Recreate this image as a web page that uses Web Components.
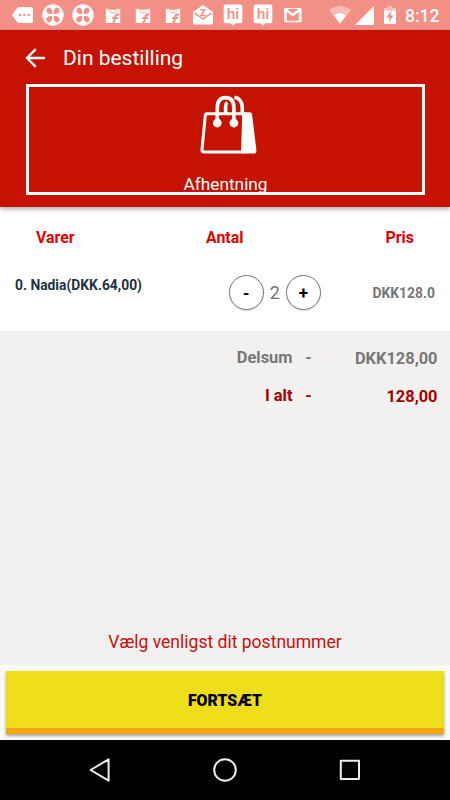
<!DOCTYPE html>
<html lang="da">
<head>
<meta charset="UTF-8">
<meta name="viewport" content="width=device-width, initial-scale=1">
<title>Din bestilling</title>
<style>
    body {
        margin: 0;
        font-family: Roboto, "Liberation Sans", sans-serif;
        background: #f3f1f0;
    }
</style>
</head>
<body>
<order-screen></order-screen>

<script>
const petal = 'M10.2 10.2C10.3 8.6 10.2 6.8 9.6 5.4C9 4 7.6 3.3 6.3 3.8C4.8 4.4 4.2 6 4.5 7.3C4.9 9.2 7 10.2 10.2 10.2Z';

const flower = `
    <svg width="22" height="22" viewBox="0 0 22 22">
        <circle cx="11" cy="11" r="10.7" fill="#fff"/>
        <g fill="#f39086">
            <path d="${petal}"/>
            <path d="${petal}" transform="translate(22 0) scale(-1 1)"/>
            <path d="${petal}" transform="translate(0 22) scale(1 -1)"/>
            <path d="${petal}" transform="rotate(180 11 11)"/>
        </g>
    </svg>`;

const shopBag = `
    <svg width="22" height="22" viewBox="0 0 22 22">
        <path d="M3.8 4.2L5 5.4L6.4 4.4L7.8 5.8H14.2L15.6 4.4L17 5.4L18.2 4.2V19H3.8Z" fill="#fff"/>
        <path d="M7 5.8C7.4 9.6 14.6 9.6 15 5.8" fill="none" stroke="#f39086" stroke-width=".8"/>
        <path d="M17.2 10.5C14.4 9.9 13.7 11 13.3 12.8L12.4 17Q12 18.4 10.6 18.2M10.3 13.9H16" fill="none" stroke="#f39086" stroke-width="2"/>
    </svg>`;

const hike = `
    <svg width="22" height="22" viewBox="0 0 22 22">
        <path d="M3.5 .6H18.5Q20.3 .6 20.3 2.4V17.2Q20.3 19.2 18.5 19.2H13.5L11 21.7L8.5 19.2H3.5Q1.7 19.2 1.7 17.2V2.4Q1.7 .6 3.5 .6Z" fill="#fff"/>
        <text x="11" y="14.7" text-anchor="middle" font-family="Roboto" font-size="15.5" font-weight="500" fill="#f39086">hi</text>
    </svg>`;

const icons = {
    more: `
        <svg width="22" height="22" viewBox="0 0 22 22">
            <path d="M0 11L5.2 4Q6 3 7.2 3H19.5Q21 3 21 4.5V17.5Q21 19 19.5 19H7.2Q6 19 5.2 18Z" fill="#fff"/>
            <g fill="#f39086"><circle cx="8" cy="11" r="1.2"/><circle cx="12.3" cy="11" r="1.2"/><circle cx="16.6" cy="11" r="1.2"/></g>
        </svg>`,
    flower,
    shopBag,
    hike,
    mail: `
        <svg width="22" height="22" viewBox="0 0 22 22">
            <path d="M1 8L11 1L21 8V19Q21 20.5 19.5 20.5H2.5Q1 20.5 1 19Z" fill="#fff"/>
            <path d="M2.4 8.8L11 15L19.6 8.8" fill="none" stroke="#f39086" stroke-width="1.5"/>
            <text x="11" y="11.6" text-anchor="middle" font-family="Roboto" font-size="9.5" font-weight="900" fill="#f39086">Z</text>
        </svg>`,
    gmail: `
        <svg width="22" height="22" viewBox="0 0 22 22">
            <rect x="2" y="4" width="17.6" height="14.2" rx="1.4" fill="#fff"/>
            <path d="M4.8 8V16.7H16.8V8L10.8 12.6Z M5.2 5.1H16.4L10.8 9.4Z" fill="#f39086"/>
        </svg>`,
    wifi: `
        <svg width="22" height="18" viewBox="0 0 22 18">
            <path d="M0 4Q11-4 22 4L11 17.5Z" fill="#fff" opacity=".4"/>
            <path d="M4.7 9.6Q11 4.2 17.3 9.6L11 17.5Z" fill="#fff"/>
        </svg>`,
    signal: `
        <svg width="19" height="19" viewBox="0 0 19 19"><path d="M19 0V19H0Z" fill="#fff"/></svg>`,
    battery: `
        <svg width="12" height="18" viewBox="0 0 12 18">
            <path d="M3.7 0H8.3V2H12V5H0V2H3.7Z" fill="#fff" opacity=".45"/>
            <path d="M0 4.8H12V17Q12 18 11 18H1Q0 18 0 17Z" fill="#fff"/>
            <path d="M7.4 4.3L2.4 11.4H5.6L4.6 16.6L9.7 9.4H6.6Z" fill="#f39086"/>
        </svg>`
};

class StatusBar extends HTMLElement {
    connectedCallback() {
        const notices = ['more', 'flower', 'flower', 'shopBag', 'shopBag', 'shopBag', 'mail', 'hike', 'hike', 'gmail'];
        this.attachShadow({ mode: 'open' });
        this.shadowRoot.innerHTML = `
            <style>
                :host {
                    display: flex;
                    align-items: center;
                    height: 30px;
                    background: #f39086;
                    color: #fff;
                }
                svg { display: block; }
                .notices { display: flex; padding-left: 7.5px; flex: 1; }
                .notices span {
                    width: 30px;
                    height: 30px;
                    display: flex;
                    align-items: center;
                    justify-content: center;
                }
                .system { display: flex; align-items: center; padding-right: 10.5px; }
                .signal { margin-left: 4.5px; }
                .battery { margin-left: 10px; }
                time { font-size: 17.5px; font-weight: 500; margin-left: 9px; line-height: 30px; padding-top: 1px; }
            </style>
            <div class="notices">${notices.map(n => `<span>${icons[n]}</span>`).join('')}</div>
            <div class="system">
                <span>${icons.wifi}</span>
                <span class="signal">${icons.signal}</span>
                <span class="battery">${icons.battery}</span>
                <time>8:12</time>
            </div>
        `;
    }
}

class OrderHeader extends HTMLElement {
    connectedCallback() {
        this.attachShadow({ mode: 'open' });
        this.shadowRoot.innerHTML = `
            <style>
                :host {
                    display: block;
                    box-sizing: border-box;
                    height: 177px;
                    background: #c61200;
                    color: #fff;
                    box-shadow: 0 2px 5px rgba(0, 0, 0, 0.35);
                    position: relative;
                }
                .bar { display: flex; align-items: center; height: 54px; padding: 0 25px; }
                .bar svg { display: block; margin-top: 1px; }
                h1 { margin: 1px 0 0 18px; font-size: 21px; font-weight: 400; line-height: 30px; }
                .pickup {
                    box-sizing: border-box;
                    height: 111px;
                    margin: 0 25px 0 26px;
                    border: 3px solid #fff;
                    display: flex;
                    flex-direction: column;
                    align-items: center;
                    overflow: hidden;
                }
                .pickup svg { flex: none; margin: 8px 0 0 6px; }
                .label { font-size: 17.3px; line-height: 24px; margin-top: 17px; flex: none; }
            </style>
            <div class="bar">
                <svg width="20" height="20" viewBox="0 0 20 20" fill="none" stroke="#fff" stroke-width="2.4">
                    <path d="M20 10H2.2M10.8 1.2L2 10L10.8 18.8"/>
                </svg>
                <h1><slot name="title"></slot></h1>
            </div>
            <div class="pickup">
                <svg width="58" height="60" viewBox="0 0 58 60" fill="none" stroke="#fff">
                    <path d="M6.8 18.7H43.7L42.6 57H3.9Q1.7 57 2 54.7L5.3 20.4Q5.5 18.7 6.8 18.7Z" stroke-width="3"/>
                    <path d="M43 17.2H49.8Q51.8 17.2 52.1 19.4L56.4 55.3Q56.7 58.5 54.2 58.5H42Z" fill="#fff" stroke="none"/>
                    <path d="M17.3 28V13Q17.3 2.6 25.6 2.6Q33.9 2.6 33.9 13V28" stroke-width="3.6"/>
                    <path d="M25.6 18V11.5Q25.6 8.6 27.3 7.4" stroke-width="3.6"/>
                    <path d="M34.4 2.3Q42.3 3.5 42.3 13V18" stroke-width="3.6"/>
                    <g fill="#fff" stroke="none"><circle cx="17.3" cy="28" r="4.4"/><circle cx="33.9" cy="28" r="4.4"/></g>
                </svg>
                <div class="label"><slot name="method"></slot></div>
            </div>
        `;
    }
}

class QuantityStepper extends HTMLElement {
    connectedCallback() {
        this.attachShadow({ mode: 'open' });
        this.shadowRoot.innerHTML = `
            <style>
                :host { display: flex; align-items: center; }
                button {
                    box-sizing: border-box;
                    width: 35px;
                    height: 35px;
                    padding: 0;
                    border: 1px solid #777;
                    border-radius: 50%;
                    background: #fff;
                    box-shadow: 0 1px 2px rgba(0, 0, 0, 0.15);
                    color: #000;
                    font: 700 17px Roboto, sans-serif;
                }
                span { width: 22.5px; text-align: center; font-size: 18px; color: #6f6f6f; }
            </style>
            <button>-</button>
            <span><slot></slot></span>
            <button>+</button>
        `;
    }
}

class OrderItems extends HTMLElement {
    connectedCallback() {
        this.attachShadow({ mode: 'open' });
        this.shadowRoot.innerHTML = `
            <style>
                :host { display: block; height: 124px; background: #fff; font-weight: 700; }
                .head {
                    display: grid;
                    grid-template-columns: 170px 1fr auto;
                    height: 60px;
                    line-height: 61px;
                    padding: 0 36px;
                    font-size: 15.9px;
                    color: #e50000;
                }
                .row { display: grid; grid-template-columns: 228.5px 1fr auto; padding: 0 15px 0 0; height: 51px; align-items: center; }
                .name { padding: 0 0 16px 15px; font-size: 13.85px; line-height: 20px; color: #1d333d; }
                quantity-stepper { font-weight: 400; }
                .price { font-size: 13.9px; padding-top: 1px; color: #777; }
            </style>
            <div class="head"><span>Varer</span><span>Antal</span><span>Pris</span></div>
            <div class="row">
                <div class="name"><slot name="name"></slot></div>
                <quantity-stepper>2</quantity-stepper>
                <div class="price"><slot name="price"></slot></div>
            </div>
        `;
    }
}

class TotalLine extends HTMLElement {
    connectedCallback() {
        this.attachShadow({ mode: 'open' });
        this.shadowRoot.innerHTML = `
            <style>
                :host {
                    display: grid;
                    grid-template-columns: 292.5px 32px 1fr;
                    height: 38px;
                    line-height: 38px;
                    padding-right: 12.5px;
                    font-size: 16.4px;
                    font-weight: 700;
                }
                .label, .amount { text-align: right; }
                .dash { text-align: center; }
                .amount { padding-top: 1px; }
            </style>
            <span class="label"><slot name="label"></slot></span>
            <span class="dash">-</span>
            <span class="amount"><slot></slot></span>
        `;
    }
}

class ContinueButton extends HTMLElement {
    connectedCallback() {
        this.attachShadow({ mode: 'open' });
        this.shadowRoot.innerHTML = `
            <style>
                :host { display: block; box-sizing: border-box; height: 75px; padding: 6px; background: #fafafa; }
                button {
                    display: block;
                    box-sizing: border-box;
                    width: 100%;
                    height: 63px;
                    padding: 1px 0 0;
                    border: 0;
                    border-bottom: 6px solid #f5a511;
                    background: #eedd1b;
                    box-shadow: 0 2px 3px rgba(0, 0, 0, 0.35);
                    color: #000;
                    font: 900 15.8px Roboto, sans-serif;
                }
            </style>
            <button><slot></slot></button>
        `;
    }
}

class NavBar extends HTMLElement {
    connectedCallback() {
        this.attachShadow({ mode: 'open' });
        this.shadowRoot.innerHTML = `
            <style>
                :host {
                    display: flex;
                    align-items: center;
                    justify-content: center;
                    gap: 101px;
                    height: 60px;
                    background: #000;
                }
            </style>
            <svg width="24" height="24" viewBox="0 0 24 24" fill="none" stroke="#eee" stroke-width="2" stroke-linejoin="round"><path d="M20.6 1.3V22.7L2.6 12Z"/></svg>
            <svg width="24" height="24" viewBox="0 0 24 24" fill="none" stroke="#eee" stroke-width="2"><circle cx="12" cy="12" r="10.8"/></svg>
            <svg width="24" height="24" viewBox="0 0 24 24" fill="none" stroke="#eee" stroke-width="2" stroke-linejoin="round"><rect x="2.8" y="2.8" width="18.2" height="18.2"/></svg>
        `;
    }
}

class OrderScreen extends HTMLElement {
    connectedCallback() {
        this.attachShadow({ mode: 'open' });
        this.shadowRoot.innerHTML = `
            <style>
                :host { display: flex; flex-direction: column; width: 450px; height: 800px; overflow: hidden; }
                .totals { flex: 1; padding-top: 8px; color: #777; }
                .grand { color: #a60000; }
                .notice { height: 47px; line-height: 48px; text-align: center; font-size: 17.55px; color: #c90f0b; }
            </style>
            <status-bar></status-bar>
            <order-header>
                <span slot="title">Din bestilling</span>
                <span slot="method">Afhentning</span>
            </order-header>
            <order-items>
                <span slot="name">0. Nadia(DKK.64,00)</span>
                <span slot="price">DKK128.0</span>
            </order-items>
            <div class="totals">
                <total-line><span slot="label">Delsum</span>DKK128,00</total-line>
                <total-line class="grand"><span slot="label">I alt</span>128,00</total-line>
            </div>
            <div class="notice">Vælg venligst dit postnummer</div>
            <continue-button>FORTSÆT</continue-button>
            <nav-bar></nav-bar>
        `;
    }
}

customElements.define('status-bar', StatusBar);
customElements.define('order-header', OrderHeader);
customElements.define('quantity-stepper', QuantityStepper);
customElements.define('order-items', OrderItems);
customElements.define('total-line', TotalLine);
customElements.define('continue-button', ContinueButton);
customElements.define('nav-bar', NavBar);
customElements.define('order-screen', OrderScreen);
</script>
</body>
</html>
